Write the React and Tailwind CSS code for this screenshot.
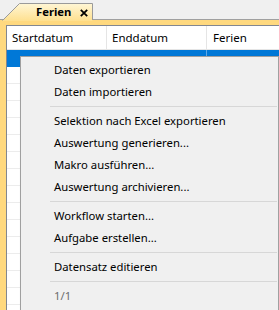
const rows = Array.from({ length: 16 })

const menuItems = [
  { label: "Daten exportieren" },
  { label: "Daten importieren" },
  { sep: true },
  { label: "Selektion nach Excel exportieren" },
  { label: "Auswertung generieren..." },
  { label: "Makro ausführen..." },
  { label: "Auswertung archivieren..." },
  { sep: true },
  { label: "Workflow starten..." },
  { label: "Aufgabe erstellen..." },
  { sep: true },
  { label: "Datensatz editieren" },
  { sep: true },
  { label: "1/1", disabled: true },
]

function Tab() {
  return (
    <div className="relative ml-[2px] mt-[3px] h-[18px] w-[91px]">
      <svg className="absolute inset-0" width="91" height="18" viewBox="0 0 91 18">
        <defs>
          <linearGradient id="tabfill" x1="0" y1="0" x2="0" y2="1">
            <stop offset="0" stopColor="#fff6d6" />
            <stop offset="1" stopColor="#fee08f" />
          </linearGradient>
        </defs>
        <path d="M0.5 18 L17.5 0.5 L90.5 0.5 L90.5 18 Z" fill="url(#tabfill)" />
        <path d="M0.5 17.5 L17.5 0.5 L90.5 0.5 L90.5 17" fill="none" stroke="#9a9a9a" strokeWidth="1" />
      </svg>
      <div className="relative flex h-full items-center pl-[34px] gap-[9px]">
        <span className="text-[11.3px] font-bold text-black leading-none">Ferien</span>
        <svg width="8" height="8" viewBox="0 0 8 8" className="mt-[1px]">
          <path d="M0.8 0.8 L7.2 7.2 M7.2 0.8 L0.8 7.2" stroke="#000" strokeWidth="1.8" />
        </svg>
      </div>
    </div>
  )
}

export default function App() {
  return (
    <div
      className="relative w-[279px] h-[310px] overflow-hidden bg-[#f0f0f0]"
      style={{ fontFamily: '"Noto Sans", "Open Sans", sans-serif' }}
    >
      <div className="flex h-[20px] border-b border-[#a0a0a0]">
        <Tab />
      </div>

      <div className="h-[290px] bg-[#ffd97f] pl-[6px] pt-[5px]">
        <div className="h-full border-l border-t border-[#828790] bg-white">
          <div className="flex h-[24px] border-b border-[#e5e5e5] text-[11.5px] text-black">
            <div className="flex w-[100px] items-center border-r border-[#e5e5e5] pl-[5px]">Startdatum</div>
            <div className="flex w-[100px] items-center border-r border-[#e5e5e5] pl-[5px]">Enddatum</div>
            <div className="flex flex-1 items-center pl-[6px]">Ferien</div>
          </div>
          <div className="flex h-[17px] bg-[#0078d7] text-[11.5px] text-white">
            <div className="w-[100px]" />
            <div className="w-[100px] border-r border-[#5fa8e6]" />
            <div className="flex flex-1 items-start pl-[6px] pt-[5px] leading-none">Nein</div>
          </div>
          {rows.map((_, i) => (
            <div key={i} className="h-[17px] border-b border-[#ececec]" />
          ))}
        </div>
      </div>

      <div className="absolute left-[20px] top-[56px] w-[259px] h-[260px] border border-[#a0a0a0] bg-[#f0f0f0] pt-[2px] shadow-[2px_2px_3px_rgba(0,0,0,0.25)]">
        {menuItems.map((item, i) =>
          item.sep ? (
            <div key={i} className="flex h-[7px] items-center pl-[29px] pr-[1px]">
              <div className="h-px w-full bg-[#d7d7d7]" />
            </div>
          ) : (
            <div
              key={i}
              className={
                "flex h-[22px] items-center pl-[33px] text-[11.3px] " +
                (item.disabled ? "text-[#6d6d6d]" : "text-black")
              }
            >
              {item.label}
            </div>
          )
        )}
      </div>
    </div>
  )
}
